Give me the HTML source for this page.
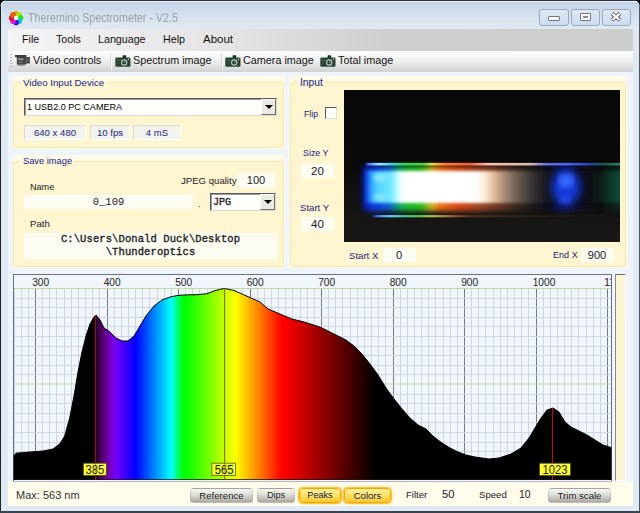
<!DOCTYPE html>
<html><head><meta charset="utf-8"><title>Theremino Spectrometer - V2.5</title>
<style>
html,body{margin:0;padding:0;}
body{width:640px;height:513px;overflow:hidden;background:#000;font-family:"Liberation Sans",sans-serif;font-size:11px;color:#111;position:relative;}
.abs{position:absolute;}
#win{position:absolute;left:0;top:0;width:640px;height:513px;background:linear-gradient(#c2d2e6 0px,#c6d6e9 5px,#d1deed 13px,#dbe5f1 22px,#e0e9f3 30px,#dfe9f4 100%);border-radius:7px 7px 0 0;overflow:hidden;}
#frameL{left:0;top:0;width:2px;height:513px;background:linear-gradient(90deg,#1c2028 0 1px,#dfe7f1 1px 2px);}
#frameR{left:638.6px;top:0;width:1.4px;height:513px;background:#4c5664;}
#frameT{left:0;top:0;width:640px;height:2.4px;background:linear-gradient(#2c323c 0 1.1px,#e6edf5 1.1px 2.4px);}
#frameB{left:0;top:510.6px;width:640px;height:2.4px;background:#3a4250;}
#title{left:28px;top:10.6px;font-size:12px;color:#9da1a7;white-space:nowrap;transform:scaleX(0.892);transform-origin:0 0;}
.cap{top:9px;height:16.6px;border:1px solid #9aa9bd;border-radius:3px;background:linear-gradient(#dfe9f6,#cfdcee);box-sizing:border-box;}
#menubar{left:8px;top:28.7px;width:624.5px;height:21.9px;background:linear-gradient(90deg,#f4f4f4 0%,#e4e4e4 35%,#cfcfcf 60%,#cdcdcd 100%);}
#menubar span{position:absolute;top:4.3px;font-size:10.7px;color:#111;white-space:nowrap;}
#toolbar{left:8px;top:50.5px;width:624.5px;height:21.7px;background:linear-gradient(#fdfdfd 0%,#f0f0f0 45%,#e2e2e2 70%,#d2d2d2 100%);}
#toolbar span{position:absolute;top:3.5px;font-size:10.8px;color:#111;white-space:nowrap;}
#client{left:8px;top:72px;width:624.5px;height:434px;background:#eef4fb;}
.grp{position:absolute;background:#fffae6;}
.grp .bd{position:absolute;border:1px solid #f8e6a6;border-radius:3px;box-sizing:border-box;background:#fff5d1;}
.grp .tt{position:absolute;background:linear-gradient(#fffae6 0 6px,#fff6d4 6px 100%);color:#20248a;white-space:nowrap;padding:0 2px;font-size:9.7px;line-height:13px;}
.lbl{position:absolute;white-space:nowrap;font-size:9.6px;line-height:13px;color:#1a1a2a;}
.blue{color:#20247a;}
.box{position:absolute;background:#fdfcf2;box-sizing:border-box;text-align:center;white-space:nowrap;}
.sunk{background:#f3f4ee;border:1px solid;border-color:#d9d9d0 #fff #fff #d9d9d0;}
.combo{position:absolute;background:#fffefa;box-sizing:border-box;border:1px solid;border-color:#55595f #d8d8d0 #d8d8d0 #55595f;box-shadow:inset 1px 1px 0 #9a9a9a;}
.combo .dd{position:absolute;right:0px;top:0px;bottom:0px;width:15px;background:#ece9e0;border:1px solid;border-color:#fff #6d6d6d #6d6d6d #fff;box-sizing:border-box;}
.combo .dd:after{content:"";position:absolute;left:3px;top:5px;border:4px solid transparent;border-top:4px solid #000;border-bottom:0;}
.mono{font-family:"Liberation Mono",monospace;font-size:10.5px;color:#222;}
.btn{position:absolute;box-sizing:border-box;height:15px;border-radius:4px;border:1px solid rgba(150,150,140,0.3);border-bottom-color:rgba(120,120,110,0.45);background:linear-gradient(#f8f8f4,#dcdcd6 45%,#aaa79f);text-shadow:0 0 2px #fff;text-align:center;font-size:9.6px;line-height:13px;color:#111;white-space:nowrap;}
.btn.on{border-color:#f0a800;background:linear-gradient(#fff0a0,#ffdc58 55%,#ffc830);box-shadow:0 0 1.5px 0.5px #f8b820;}
</style></head><body>
<div id="win">
<div class="abs" id="title">Theremino Spectrometer - V2.5</div>
<svg class="abs" style="left:8px;top:10.2px" width="17" height="17" viewBox="0 0 17 17"><defs><filter id="ib"><feGaussianBlur stdDeviation="0.55"/></filter></defs><g filter="url(#ib)"><circle cx="8.1" cy="8" r="7.8" fill="#fff" opacity="0.4"/><circle cx="8.10" cy="3.60" r="2.9" fill="rgb(224,173,22)"/><circle cx="11.21" cy="4.89" r="2.9" fill="rgb(173,224,22)"/><circle cx="12.50" cy="8.00" r="2.9" fill="rgb(39,224,22)"/><circle cx="11.21" cy="11.11" r="2.9" fill="rgb(22,190,224)"/><circle cx="8.10" cy="12.40" r="2.9" fill="rgb(56,22,224)"/><circle cx="4.99" cy="11.11" r="2.9" fill="rgb(224,22,224)"/><circle cx="3.70" cy="8.00" r="2.9" fill="rgb(224,22,49)"/><circle cx="4.99" cy="4.89" r="2.9" fill="rgb(224,96,22)"/><circle cx="8.1" cy="8" r="2.2" fill="#fff"/></g></svg>
<div class="abs cap" style="left:539px;width:30px;"><div class="abs" style="left:8px;top:6.4px;width:9.5px;height:3px;border:1px solid #6d7685;background:#fff;border-radius:1px"></div></div>
<div class="abs cap" style="left:571px;width:29px;"><div class="abs" style="left:7.6px;top:3px;width:9px;height:6px;border:1px solid #6d7685;background:#fff;border-radius:1px"><div class="abs" style="left:2px;top:2px;width:5px;height:2px;background:#808a98"></div></div></div>
<div class="abs cap" style="left:602px;width:29px;"><svg class="abs" style="left:7.4px;top:2.2px" width="12" height="10" viewBox="0 0 12 10"><path d="M2,1.6 L10,8 M10,1.6 L2,8" stroke="#5e6675" stroke-width="4" stroke-linecap="butt"/><path d="M2.4,1.9 L9.6,7.7 M9.6,1.9 L2.4,7.7" stroke="#fff" stroke-width="2" stroke-linecap="butt"/></svg></div>

<div class="abs" id="menubar">
<span style="left:14px">File</span><span style="left:48px">Tools</span><span style="left:90px">Language</span><span style="left:155px">Help</span><span style="left:195px;font-size:11.5px">About</span>
</div>
<div class="abs" id="toolbar">
<div class="abs" style="left:1.5px;top:3.5px;width:2px;height:14px;background:repeating-linear-gradient(#b4b4b4 0 1.5px,transparent 1.5px 3px)"></div>
<svg class="abs" style="left:7.4px;top:4.6px" width="16" height="12" viewBox="0 0 16 12"><rect x="0" y="0" width="11.5" height="2.1" fill="#3a3a3a"/><rect x="1.8" y="2" width="9.7" height="7.4" fill="#464646"/><rect x="3" y="3.4" width="5.4" height="1.8" fill="#9a9a9a"/><rect x="3.4" y="6.8" width="4.2" height="1" fill="#8a8a8a"/><rect x="11.5" y="2" width="3.3" height="6.4" fill="#2c2c2c"/><rect x="12.6" y="2.6" width="0.9" height="5" fill="#8c8c8c"/><rect x="2.4" y="9.4" width="7.4" height="1.1" fill="#555"/></svg>
<svg class="abs cam" style="left:107px;top:4.6px" width="16" height="12" viewBox="0 0 16 12"><rect x="7.6" y="0.3" width="3.6" height="2.6" rx="0.6" fill="#1c3024"/><rect x="0.3" y="2.4" width="15.2" height="9.4" rx="1.3" fill="#274433"/><rect x="1.2" y="4.6" width="4.2" height="1.1" fill="#4a6a54"/><rect x="1.2" y="7.4" width="3.6" height="1" fill="#3a5a46"/><circle cx="9.2" cy="7.5" r="3.2" fill="#b4c8bc"/><circle cx="9.2" cy="7.5" r="2" fill="#1e3428"/><circle cx="9.7" cy="7.1" r="0.7" fill="#eef4ee"/><circle cx="13.4" cy="4.3" r="0.7" fill="#dfe8df"/></svg>
<svg class="abs cam" style="left:217px;top:4.6px" width="16" height="12" viewBox="0 0 16 12"><rect x="7.6" y="0.3" width="3.6" height="2.6" rx="0.6" fill="#1c3024"/><rect x="0.3" y="2.4" width="15.2" height="9.4" rx="1.3" fill="#274433"/><rect x="1.2" y="4.6" width="4.2" height="1.1" fill="#4a6a54"/><rect x="1.2" y="7.4" width="3.6" height="1" fill="#3a5a46"/><circle cx="9.2" cy="7.5" r="3.2" fill="#b4c8bc"/><circle cx="9.2" cy="7.5" r="2" fill="#1e3428"/><circle cx="9.7" cy="7.1" r="0.7" fill="#eef4ee"/><circle cx="13.4" cy="4.3" r="0.7" fill="#dfe8df"/></svg>
<svg class="abs cam" style="left:312px;top:4.6px" width="16" height="12" viewBox="0 0 16 12"><rect x="7.6" y="0.3" width="3.6" height="2.6" rx="0.6" fill="#1c3024"/><rect x="0.3" y="2.4" width="15.2" height="9.4" rx="1.3" fill="#274433"/><rect x="1.2" y="4.6" width="4.2" height="1.1" fill="#4a6a54"/><rect x="1.2" y="7.4" width="3.6" height="1" fill="#3a5a46"/><circle cx="9.2" cy="7.5" r="3.2" fill="#b4c8bc"/><circle cx="9.2" cy="7.5" r="2" fill="#1e3428"/><circle cx="9.7" cy="7.1" r="0.7" fill="#eef4ee"/><circle cx="13.4" cy="4.3" r="0.7" fill="#dfe8df"/></svg>

<span style="left:25px">Video controls</span><span style="left:125px">Spectrum image</span><span style="left:235px">Camera image</span><span style="left:330px">Total image</span>
<div class="abs" style="left:101.5px;top:3px;width:2px;height:16px;background:linear-gradient(90deg,#d2d2d2 50%,#fbfbfb 50%)"></div>
<div class="abs" style="left:212.5px;top:3px;width:2px;height:16px;background:linear-gradient(90deg,#d2d2d2 50%,#fbfbfb 50%)"></div>
</div>
<div class="abs" id="client"></div>

<!-- Video Input Device -->
<div class="grp" style="left:13px;top:76px;width:272px;height:73px">
<div class="bd" style="left:0;top:6px;width:271px;height:66px"></div>
<div class="tt" style="left:8px;top:0px">Video Input Device</div>
<div class="combo" style="left:11px;top:22px;width:253px;height:18px"><div class="lbl" style="left:2px;top:2px;color:#000;font-size:9.05px">1 USB2.0 PC CAMERA</div><div class="dd"></div></div>
<div class="box sunk lbl blue" style="left:11px;top:49px;width:62px;height:15px">640 x 480</div>
<div class="box sunk lbl blue" style="left:77px;top:49px;width:40px;height:15px">10 fps</div>
<div class="box sunk lbl blue" style="left:120px;top:49px;width:48px;height:15px">4 mS</div>
</div>

<!-- Save image -->
<div class="grp" style="left:13px;top:155px;width:272px;height:113px">
<div class="bd" style="left:0;top:6px;width:271px;height:106px"></div>
<div class="tt" style="left:8px;top:0px;font-size:9.3px">Save image</div>
<div class="lbl" style="left:17px;top:26px;font-size:9.1px">Name</div>
<div class="lbl" style="left:168px;top:19px">JPEG quality</div>
<div class="box lbl" style="left:224px;top:18px;width:38px;height:15px;font-size:11px;line-height:15px">100</div>
<div class="box mono" style="left:11px;top:40px;width:169px;height:14px;line-height:14px">0_109</div>
<div class="lbl" style="left:185px;top:42px">.</div>
<div class="combo" style="left:197px;top:38px;width:66px;height:18px"><div class="lbl mono" style="left:2px;top:2px;-webkit-text-stroke:0.35px #222;font-size:10px">JPG</div><div class="dd"></div></div>
<div class="lbl" style="left:17px;top:62px">Path</div>
<div class="box mono" style="left:11px;top:78px;width:253px;height:26px;line-height:12.5px;-webkit-text-stroke:0.35px #222;letter-spacing:0.1px">C:\Users\Donald Duck\Desktop<br>\Thunderoptics</div>
</div>

<!-- Input -->
<div class="grp" style="left:289px;top:76px;width:338px;height:192px">
<div class="bd" style="left:1px;top:6px;width:336px;height:185px"></div>
<div class="tt" style="left:9px;top:0px;font-size:10.3px">Input</div>
<div class="lbl blue" style="left:15px;top:32px;font-size:8.7px">Flip</div>
<div class="abs" style="left:36px;top:31px;width:12px;height:12px;background:#fff;box-sizing:border-box;border:1px solid;border-color:#55595f #ddd #ddd #55595f"></div>
<div class="lbl blue" style="left:14px;top:71px;font-size:8.9px">Size Y</div>
<div class="box lbl" style="left:12px;top:88px;width:33px;height:14px;font-size:11.5px;line-height:14px">20</div>
<div class="lbl blue" style="left:11px;top:125px">Start Y</div>
<div class="box lbl" style="left:12px;top:141px;width:33px;height:14px;font-size:11.5px;line-height:14px">40</div>
<div class="lbl blue" style="left:60px;top:173px">Start X</div>
<div class="box lbl" style="left:93.5px;top:172px;width:33px;height:14px;font-size:11.2px;line-height:14px">0</div>
<div class="lbl blue" style="left:264px;top:173px;font-size:9.1px">End X</div>
<div class="box lbl" style="left:291.5px;top:172px;width:33px;height:14px;font-size:11.1px;line-height:14px">900</div>
</div>
<svg class="abs" style="left:344px;top:90px" width="276" height="152" viewBox="344 90 276 152">
<defs>
<filter id="b2" x="-5%" y="-30%" width="110%" height="160%"><feGaussianBlur stdDeviation="2.2 1.6"/></filter>
<filter id="b3" x="-5%" y="-30%" width="110%" height="160%"><feGaussianBlur stdDeviation="3 2.4"/></filter>
<filter id="b4" x="-50%" y="-50%" width="200%" height="200%"><feGaussianBlur stdDeviation="4 3"/></filter>
<filter id="b1" x="-5%" y="-200%" width="110%" height="500%"><feGaussianBlur stdDeviation="1.2 0.7"/></filter>
<linearGradient id="cm" gradientUnits="userSpaceOnUse" x1="344" y1="0" x2="620" y2="0"><stop offset="0.0761" stop-color="#0a20c0"/><stop offset="0.0870" stop-color="#1858f8"/><stop offset="0.1014" stop-color="#34b0ff"/><stop offset="0.1232" stop-color="#54d4ff"/><stop offset="0.1739" stop-color="#74e8ff"/><stop offset="0.1957" stop-color="#c8ffff"/><stop offset="0.2138" stop-color="#ffffff"/><stop offset="0.4819" stop-color="#ffffff"/><stop offset="0.5109" stop-color="#ffead0"/><stop offset="0.5507" stop-color="#d8b090"/><stop offset="0.5942" stop-color="#947c6a"/><stop offset="0.6449" stop-color="#5a4e48"/><stop offset="0.6957" stop-color="#2e2a2e"/><stop offset="0.7391" stop-color="#15151c"/><stop offset="0.7681" stop-color="#0e1430"/><stop offset="0.8370" stop-color="#0e1430"/><stop offset="0.8696" stop-color="#0a0e1c"/><stop offset="0.9203" stop-color="#081414"/><stop offset="0.9565" stop-color="#0c3024"/><stop offset="1.0000" stop-color="#124a34"/></linearGradient><linearGradient id="cf" gradientUnits="userSpaceOnUse" x1="344" y1="0" x2="620" y2="0"><stop offset="0.0688" stop-color="#0614a0"/><stop offset="0.1014" stop-color="#0c38f0"/><stop offset="0.1667" stop-color="#1060e0"/><stop offset="0.1957" stop-color="#10a868"/><stop offset="0.2319" stop-color="#18c828"/><stop offset="0.2899" stop-color="#30c020"/><stop offset="0.3152" stop-color="#d8d020"/><stop offset="0.3406" stop-color="#ff7818"/><stop offset="0.4203" stop-color="#e04818"/><stop offset="0.5000" stop-color="#a04828"/><stop offset="0.6014" stop-color="#4a3224"/><stop offset="0.6920" stop-color="#1c1618"/><stop offset="0.7464" stop-color="#0a0c20"/><stop offset="0.8007" stop-color="#0c1c80"/><stop offset="0.8551" stop-color="#0a0c20"/><stop offset="0.9275" stop-color="#060a0c"/><stop offset="1.0000" stop-color="#0a2c20"/></linearGradient><linearGradient id="ct" gradientUnits="userSpaceOnUse" x1="344" y1="0" x2="620" y2="0"><stop offset="0.0688" stop-color="#1030c0" stop-opacity="0"/><stop offset="0.0870" stop-color="#3070ff"/><stop offset="0.1232" stop-color="#a0e0ff"/><stop offset="0.1739" stop-color="#40d0e0"/><stop offset="0.2246" stop-color="#30d050"/><stop offset="0.2899" stop-color="#50d040"/><stop offset="0.3188" stop-color="#f0e040"/><stop offset="0.3623" stop-color="#ff8030"/><stop offset="0.4565" stop-color="#f06038"/><stop offset="0.5217" stop-color="#ffc0b0"/><stop offset="0.6739" stop-color="#d8b8b0"/><stop offset="0.7391" stop-color="#6070e0"/><stop offset="0.8043" stop-color="#4868ff"/><stop offset="0.8913" stop-color="#2440b0"/><stop offset="0.9420" stop-color="#1c5848"/><stop offset="1.0000" stop-color="#2c8458"/></linearGradient><linearGradient id="cb" gradientUnits="userSpaceOnUse" x1="344" y1="0" x2="620" y2="0"><stop offset="0.0978" stop-color="#1030c0" stop-opacity="0"/><stop offset="0.1196" stop-color="#3878ff"/><stop offset="0.1667" stop-color="#60d0ff"/><stop offset="0.2174" stop-color="#40c8a0"/><stop offset="0.2681" stop-color="#48c848"/><stop offset="0.3188" stop-color="#b0c050"/><stop offset="0.3768" stop-color="#a07038"/><stop offset="0.4565" stop-color="#603820" stop-opacity="0.7"/><stop offset="0.7101" stop-color="#302018" stop-opacity="0.5"/><stop offset="1.0000" stop-color="#101010" stop-opacity="0.3"/></linearGradient>
<linearGradient id="cbg" x1="0" y1="0" x2="0" y2="1"><stop offset="0" stop-color="#070707"/><stop offset="0.5" stop-color="#0a0a0a"/><stop offset="0.8" stop-color="#161514"/><stop offset="1" stop-color="#181716"/></linearGradient><clipPath id="camclip"><rect x="344" y="90" width="276" height="152"/></clipPath>
</defs>
<g clip-path="url(#camclip)">
<rect x="344" y="90" width="276" height="152" fill="url(#cbg)"/>
<rect x="363" y="166" width="265" height="45" fill="url(#cf)" filter="url(#b3)" opacity="0.95"/>
<rect x="365" y="171" width="263" height="32" fill="url(#cm)" filter="url(#b2)"/>
<ellipse cx="380" cy="178" rx="7" ry="4" fill="#90e8ff" filter="url(#b2)" opacity="0.8"/>
<ellipse cx="380" cy="197" rx="7" ry="3.5" fill="#90e8ff" filter="url(#b2)" opacity="0.7"/>
<ellipse cx="566" cy="187" rx="14" ry="17" fill="#1638d8" filter="url(#b4)"/>
<ellipse cx="566" cy="181" rx="8" ry="7" fill="#3468ff" filter="url(#b3)"/>
<ellipse cx="565" cy="200" rx="6" ry="3" fill="#2c5cff" filter="url(#b3)" opacity="0.8"/>
<rect x="366" y="162.9" width="262" height="2.6" fill="url(#ct)" filter="url(#b1)"/><rect x="366" y="163.6" width="262" height="1.2" fill="url(#ct)"/>
<rect x="372" y="215.1" width="256" height="2.2" fill="url(#cb)" filter="url(#b1)"/><rect x="374" y="215.7" width="254" height="1" fill="url(#cb)" opacity="0.8"/>
</g>
</svg>

<!-- right strip -->
<div class="abs" style="left:615px;top:274px;width:11px;height:207px;background:#fbf5d6;border:1px solid;border-color:#6a6a6a #fff #fff #8a8a8a;box-sizing:border-box"></div>
<!-- bottom strip -->
<div class="abs" style="left:8px;top:482px;width:624.5px;height:23.6px;background:#fffcec"></div>
<div class="lbl" style="left:16px;top:489px;font-size:11px;color:#333">Max: 563 nm</div>
<div class="btn" style="left:190px;top:488px;width:63px">Reference</div>
<div class="btn" style="left:257px;top:488px;width:38px;font-size:9.1px">Dips</div>
<div class="btn on" style="left:299px;top:488px;width:42px;font-size:9.1px">Peaks</div>
<div class="btn on" style="left:344px;top:488px;width:47px">Colors</div>
<div class="lbl" style="left:406px;top:488px">Filter</div>
<div class="lbl" style="left:442px;top:488px;font-size:11.2px">50</div>
<div class="lbl" style="left:479px;top:488px">Speed</div>
<div class="lbl" style="left:519px;top:488px;font-size:10.5px">10</div>
<div class="btn" style="left:548px;top:488px;width:63px">Trim scale</div>

<svg class="chart" width="640" height="513" viewBox="0 0 640 513" style="position:absolute;left:0;top:0">
<defs><linearGradient id="sg" gradientUnits="userSpaceOnUse" x1="13" y1="0" x2="611" y2="0"><stop offset="0" stop-color="#000"/><stop offset="0.1333" stop-color="rgb(0,0,0)"/><stop offset="0.1393" stop-color="rgb(37,0,40)"/><stop offset="0.1452" stop-color="rgb(66,0,80)"/><stop offset="0.1512" stop-color="rgb(90,0,120)"/><stop offset="0.1572" stop-color="rgb(106,0,159)"/><stop offset="0.1632" stop-color="rgb(116,0,199)"/><stop offset="0.1691" stop-color="rgb(120,0,239)"/><stop offset="0.1751" stop-color="rgb(106,0,255)"/><stop offset="0.1811" stop-color="rgb(85,0,255)"/><stop offset="0.1871" stop-color="rgb(64,0,255)"/><stop offset="0.1931" stop-color="rgb(42,0,255)"/><stop offset="0.1990" stop-color="rgb(21,0,255)"/><stop offset="0.2050" stop-color="rgb(0,0,255)"/><stop offset="0.2110" stop-color="rgb(0,26,255)"/><stop offset="0.2170" stop-color="rgb(0,51,255)"/><stop offset="0.2230" stop-color="rgb(0,76,255)"/><stop offset="0.2289" stop-color="rgb(0,102,255)"/><stop offset="0.2349" stop-color="rgb(0,128,255)"/><stop offset="0.2409" stop-color="rgb(0,153,255)"/><stop offset="0.2469" stop-color="rgb(0,178,255)"/><stop offset="0.2528" stop-color="rgb(0,204,255)"/><stop offset="0.2588" stop-color="rgb(0,230,255)"/><stop offset="0.2648" stop-color="rgb(0,255,255)"/><stop offset="0.2708" stop-color="rgb(0,255,175)"/><stop offset="0.2768" stop-color="rgb(0,255,96)"/><stop offset="0.2827" stop-color="rgb(0,255,16)"/><stop offset="0.2887" stop-color="rgb(0,255,0)"/><stop offset="0.2947" stop-color="rgb(18,255,0)"/><stop offset="0.3007" stop-color="rgb(36,255,0)"/><stop offset="0.3066" stop-color="rgb(55,255,0)"/><stop offset="0.3126" stop-color="rgb(73,255,0)"/><stop offset="0.3186" stop-color="rgb(91,255,0)"/><stop offset="0.3246" stop-color="rgb(109,255,0)"/><stop offset="0.3306" stop-color="rgb(128,255,0)"/><stop offset="0.3365" stop-color="rgb(146,255,0)"/><stop offset="0.3425" stop-color="rgb(164,255,0)"/><stop offset="0.3485" stop-color="rgb(182,255,0)"/><stop offset="0.3545" stop-color="rgb(200,255,0)"/><stop offset="0.3605" stop-color="rgb(219,255,0)"/><stop offset="0.3664" stop-color="rgb(237,255,0)"/><stop offset="0.3724" stop-color="rgb(255,255,0)"/><stop offset="0.3784" stop-color="rgb(255,235,0)"/><stop offset="0.3844" stop-color="rgb(255,216,0)"/><stop offset="0.3903" stop-color="rgb(255,196,0)"/><stop offset="0.3963" stop-color="rgb(255,177,0)"/><stop offset="0.4023" stop-color="rgb(255,157,0)"/><stop offset="0.4083" stop-color="rgb(255,137,0)"/><stop offset="0.4143" stop-color="rgb(255,118,0)"/><stop offset="0.4202" stop-color="rgb(255,98,0)"/><stop offset="0.4262" stop-color="rgb(255,78,0)"/><stop offset="0.4322" stop-color="rgb(255,59,0)"/><stop offset="0.4382" stop-color="rgb(255,39,0)"/><stop offset="0.4441" stop-color="rgb(255,20,0)"/><stop offset="0.4501" stop-color="rgb(255,0,0)"/><stop offset="0.4561" stop-color="rgb(251,0,0)"/><stop offset="0.4621" stop-color="rgb(241,0,0)"/><stop offset="0.4681" stop-color="rgb(231,0,0)"/><stop offset="0.4740" stop-color="rgb(221,0,0)"/><stop offset="0.4800" stop-color="rgb(211,0,0)"/><stop offset="0.4860" stop-color="rgb(201,0,0)"/><stop offset="0.4920" stop-color="rgb(191,0,0)"/><stop offset="0.4980" stop-color="rgb(181,0,0)"/><stop offset="0.5039" stop-color="rgb(171,0,0)"/><stop offset="0.5099" stop-color="rgb(161,0,0)"/><stop offset="0.5159" stop-color="rgb(151,0,0)"/><stop offset="0.5219" stop-color="rgb(141,0,0)"/><stop offset="0.5278" stop-color="rgb(131,0,0)"/><stop offset="0.5338" stop-color="rgb(122,0,0)"/><stop offset="0.5398" stop-color="rgb(112,0,0)"/><stop offset="0.5458" stop-color="rgb(102,0,0)"/><stop offset="0.5518" stop-color="rgb(92,0,0)"/><stop offset="0.5577" stop-color="rgb(82,0,0)"/><stop offset="0.5637" stop-color="rgb(72,0,0)"/><stop offset="0.5697" stop-color="rgb(62,0,0)"/><stop offset="0.5757" stop-color="rgb(52,0,0)"/><stop offset="0.5816" stop-color="rgb(42,0,0)"/><stop offset="0.5876" stop-color="rgb(32,0,0)"/><stop offset="0.5936" stop-color="rgb(22,0,0)"/><stop offset="0.5996" stop-color="rgb(12,0,0)"/><stop offset="0.6056" stop-color="rgb(2,0,0)"/><stop offset="0.6115" stop-color="rgb(0,0,0)"/><stop offset="0.6175" stop-color="rgb(0,0,0)"/><stop offset="1" stop-color="#000"/></linearGradient><clipPath id="cc"><rect x="14" y="275" width="597" height="206"/></clipPath></defs>
<rect x="13.5" y="274.5" width="598" height="207" fill="#f1f6fd" stroke="#6d7078"/><line x1="13" y1="481.5" x2="612" y2="481.5" stroke="#b0b4ba"/>
<g clip-path="url(#cc)" shape-rendering="crispEdges">
<line x1="14.05" y1="288.5" x2="14.05" y2="480" stroke="#cdd6e3" stroke-width="1"/><line x1="21.20" y1="288.5" x2="21.20" y2="480" stroke="#cdd6e3" stroke-width="1"/><line x1="28.35" y1="288.5" x2="28.35" y2="480" stroke="#cdd6e3" stroke-width="1"/><line x1="35.50" y1="288" x2="35.50" y2="480" stroke="#747a8a" stroke-width="1"/><line x1="42.65" y1="288.5" x2="42.65" y2="480" stroke="#cdd6e3" stroke-width="1"/><line x1="49.80" y1="288.5" x2="49.80" y2="480" stroke="#cdd6e3" stroke-width="1"/><line x1="56.95" y1="288.5" x2="56.95" y2="480" stroke="#cdd6e3" stroke-width="1"/><line x1="64.10" y1="288.5" x2="64.10" y2="480" stroke="#cdd6e3" stroke-width="1"/><line x1="71.25" y1="288.5" x2="71.25" y2="480" stroke="#cdd6e3" stroke-width="1"/><line x1="78.40" y1="288.5" x2="78.40" y2="480" stroke="#cdd6e3" stroke-width="1"/><line x1="85.55" y1="288.5" x2="85.55" y2="480" stroke="#cdd6e3" stroke-width="1"/><line x1="92.70" y1="288.5" x2="92.70" y2="480" stroke="#cdd6e3" stroke-width="1"/><line x1="99.85" y1="288.5" x2="99.85" y2="480" stroke="#cdd6e3" stroke-width="1"/><line x1="107.00" y1="288" x2="107.00" y2="480" stroke="#747a8a" stroke-width="1"/><line x1="114.15" y1="288.5" x2="114.15" y2="480" stroke="#cdd6e3" stroke-width="1"/><line x1="121.30" y1="288.5" x2="121.30" y2="480" stroke="#cdd6e3" stroke-width="1"/><line x1="128.45" y1="288.5" x2="128.45" y2="480" stroke="#cdd6e3" stroke-width="1"/><line x1="135.60" y1="288.5" x2="135.60" y2="480" stroke="#cdd6e3" stroke-width="1"/><line x1="142.75" y1="288.5" x2="142.75" y2="480" stroke="#cdd6e3" stroke-width="1"/><line x1="149.90" y1="288.5" x2="149.90" y2="480" stroke="#cdd6e3" stroke-width="1"/><line x1="157.05" y1="288.5" x2="157.05" y2="480" stroke="#cdd6e3" stroke-width="1"/><line x1="164.20" y1="288.5" x2="164.20" y2="480" stroke="#cdd6e3" stroke-width="1"/><line x1="171.35" y1="288.5" x2="171.35" y2="480" stroke="#cdd6e3" stroke-width="1"/><line x1="178.50" y1="288" x2="178.50" y2="480" stroke="#747a8a" stroke-width="1"/><line x1="185.65" y1="288.5" x2="185.65" y2="480" stroke="#cdd6e3" stroke-width="1"/><line x1="192.80" y1="288.5" x2="192.80" y2="480" stroke="#cdd6e3" stroke-width="1"/><line x1="199.95" y1="288.5" x2="199.95" y2="480" stroke="#cdd6e3" stroke-width="1"/><line x1="207.10" y1="288.5" x2="207.10" y2="480" stroke="#cdd6e3" stroke-width="1"/><line x1="214.25" y1="288.5" x2="214.25" y2="480" stroke="#cdd6e3" stroke-width="1"/><line x1="221.40" y1="288.5" x2="221.40" y2="480" stroke="#cdd6e3" stroke-width="1"/><line x1="228.55" y1="288.5" x2="228.55" y2="480" stroke="#cdd6e3" stroke-width="1"/><line x1="235.70" y1="288.5" x2="235.70" y2="480" stroke="#cdd6e3" stroke-width="1"/><line x1="242.85" y1="288.5" x2="242.85" y2="480" stroke="#cdd6e3" stroke-width="1"/><line x1="250.00" y1="288" x2="250.00" y2="480" stroke="#747a8a" stroke-width="1"/><line x1="257.15" y1="288.5" x2="257.15" y2="480" stroke="#cdd6e3" stroke-width="1"/><line x1="264.30" y1="288.5" x2="264.30" y2="480" stroke="#cdd6e3" stroke-width="1"/><line x1="271.45" y1="288.5" x2="271.45" y2="480" stroke="#cdd6e3" stroke-width="1"/><line x1="278.60" y1="288.5" x2="278.60" y2="480" stroke="#cdd6e3" stroke-width="1"/><line x1="285.75" y1="288.5" x2="285.75" y2="480" stroke="#cdd6e3" stroke-width="1"/><line x1="292.90" y1="288.5" x2="292.90" y2="480" stroke="#cdd6e3" stroke-width="1"/><line x1="300.05" y1="288.5" x2="300.05" y2="480" stroke="#cdd6e3" stroke-width="1"/><line x1="307.20" y1="288.5" x2="307.20" y2="480" stroke="#cdd6e3" stroke-width="1"/><line x1="314.35" y1="288.5" x2="314.35" y2="480" stroke="#cdd6e3" stroke-width="1"/><line x1="321.50" y1="288" x2="321.50" y2="480" stroke="#747a8a" stroke-width="1"/><line x1="328.65" y1="288.5" x2="328.65" y2="480" stroke="#cdd6e3" stroke-width="1"/><line x1="335.80" y1="288.5" x2="335.80" y2="480" stroke="#cdd6e3" stroke-width="1"/><line x1="342.95" y1="288.5" x2="342.95" y2="480" stroke="#cdd6e3" stroke-width="1"/><line x1="350.10" y1="288.5" x2="350.10" y2="480" stroke="#cdd6e3" stroke-width="1"/><line x1="357.25" y1="288.5" x2="357.25" y2="480" stroke="#cdd6e3" stroke-width="1"/><line x1="364.40" y1="288.5" x2="364.40" y2="480" stroke="#cdd6e3" stroke-width="1"/><line x1="371.55" y1="288.5" x2="371.55" y2="480" stroke="#cdd6e3" stroke-width="1"/><line x1="378.70" y1="288.5" x2="378.70" y2="480" stroke="#cdd6e3" stroke-width="1"/><line x1="385.85" y1="288.5" x2="385.85" y2="480" stroke="#cdd6e3" stroke-width="1"/><line x1="393.00" y1="288" x2="393.00" y2="480" stroke="#747a8a" stroke-width="1"/><line x1="400.15" y1="288.5" x2="400.15" y2="480" stroke="#cdd6e3" stroke-width="1"/><line x1="407.30" y1="288.5" x2="407.30" y2="480" stroke="#cdd6e3" stroke-width="1"/><line x1="414.45" y1="288.5" x2="414.45" y2="480" stroke="#cdd6e3" stroke-width="1"/><line x1="421.60" y1="288.5" x2="421.60" y2="480" stroke="#cdd6e3" stroke-width="1"/><line x1="428.75" y1="288.5" x2="428.75" y2="480" stroke="#cdd6e3" stroke-width="1"/><line x1="435.90" y1="288.5" x2="435.90" y2="480" stroke="#cdd6e3" stroke-width="1"/><line x1="443.05" y1="288.5" x2="443.05" y2="480" stroke="#cdd6e3" stroke-width="1"/><line x1="450.20" y1="288.5" x2="450.20" y2="480" stroke="#cdd6e3" stroke-width="1"/><line x1="457.35" y1="288.5" x2="457.35" y2="480" stroke="#cdd6e3" stroke-width="1"/><line x1="464.50" y1="288" x2="464.50" y2="480" stroke="#747a8a" stroke-width="1"/><line x1="471.65" y1="288.5" x2="471.65" y2="480" stroke="#cdd6e3" stroke-width="1"/><line x1="478.80" y1="288.5" x2="478.80" y2="480" stroke="#cdd6e3" stroke-width="1"/><line x1="485.95" y1="288.5" x2="485.95" y2="480" stroke="#cdd6e3" stroke-width="1"/><line x1="493.10" y1="288.5" x2="493.10" y2="480" stroke="#cdd6e3" stroke-width="1"/><line x1="500.25" y1="288.5" x2="500.25" y2="480" stroke="#cdd6e3" stroke-width="1"/><line x1="507.40" y1="288.5" x2="507.40" y2="480" stroke="#cdd6e3" stroke-width="1"/><line x1="514.55" y1="288.5" x2="514.55" y2="480" stroke="#cdd6e3" stroke-width="1"/><line x1="521.70" y1="288.5" x2="521.70" y2="480" stroke="#cdd6e3" stroke-width="1"/><line x1="528.85" y1="288.5" x2="528.85" y2="480" stroke="#cdd6e3" stroke-width="1"/><line x1="536.00" y1="288" x2="536.00" y2="480" stroke="#747a8a" stroke-width="1"/><line x1="543.15" y1="288.5" x2="543.15" y2="480" stroke="#cdd6e3" stroke-width="1"/><line x1="550.30" y1="288.5" x2="550.30" y2="480" stroke="#cdd6e3" stroke-width="1"/><line x1="557.45" y1="288.5" x2="557.45" y2="480" stroke="#cdd6e3" stroke-width="1"/><line x1="564.60" y1="288.5" x2="564.60" y2="480" stroke="#cdd6e3" stroke-width="1"/><line x1="571.75" y1="288.5" x2="571.75" y2="480" stroke="#cdd6e3" stroke-width="1"/><line x1="578.90" y1="288.5" x2="578.90" y2="480" stroke="#cdd6e3" stroke-width="1"/><line x1="586.05" y1="288.5" x2="586.05" y2="480" stroke="#cdd6e3" stroke-width="1"/><line x1="593.20" y1="288.5" x2="593.20" y2="480" stroke="#cdd6e3" stroke-width="1"/><line x1="600.35" y1="288.5" x2="600.35" y2="480" stroke="#cdd6e3" stroke-width="1"/><line x1="607.50" y1="288" x2="607.50" y2="480" stroke="#747a8a" stroke-width="1"/><line x1="14" y1="298.10" x2="611" y2="298.10" stroke="#cdd6e3" stroke-width="1"/><line x1="14" y1="307.70" x2="611" y2="307.70" stroke="#cdd6e3" stroke-width="1"/><line x1="14" y1="317.30" x2="611" y2="317.30" stroke="#cdd6e3" stroke-width="1"/><line x1="14" y1="326.90" x2="611" y2="326.90" stroke="#cdd6e3" stroke-width="1"/><line x1="14" y1="336.50" x2="611" y2="336.50" stroke="#cdd6e3" stroke-width="1"/><line x1="14" y1="346.10" x2="611" y2="346.10" stroke="#cdd6e3" stroke-width="1"/><line x1="14" y1="355.70" x2="611" y2="355.70" stroke="#cdd6e3" stroke-width="1"/><line x1="14" y1="365.30" x2="611" y2="365.30" stroke="#cdd6e3" stroke-width="1"/><line x1="14" y1="374.90" x2="611" y2="374.90" stroke="#cdd6e3" stroke-width="1"/><line x1="14" y1="394.10" x2="611" y2="394.10" stroke="#cdd6e3" stroke-width="1"/><line x1="14" y1="403.70" x2="611" y2="403.70" stroke="#cdd6e3" stroke-width="1"/><line x1="14" y1="413.30" x2="611" y2="413.30" stroke="#cdd6e3" stroke-width="1"/><line x1="14" y1="422.90" x2="611" y2="422.90" stroke="#cdd6e3" stroke-width="1"/><line x1="14" y1="432.50" x2="611" y2="432.50" stroke="#cdd6e3" stroke-width="1"/><line x1="14" y1="442.10" x2="611" y2="442.10" stroke="#cdd6e3" stroke-width="1"/><line x1="14" y1="451.70" x2="611" y2="451.70" stroke="#cdd6e3" stroke-width="1"/><line x1="14" y1="461.30" x2="611" y2="461.30" stroke="#cdd6e3" stroke-width="1"/><line x1="14" y1="470.90" x2="611" y2="470.90" stroke="#cdd6e3" stroke-width="1"/>
</g>
<line x1="14" y1="288.5" x2="611" y2="288.5" stroke="#c2dc9e"/>
<line x1="14" y1="384" x2="611" y2="384" stroke="#c2dc9e"/>
<g clip-path="url(#cc)" font-family="Liberation Sans, sans-serif" fill="#222"><text x="32.2" y="285.6" font-size="10.2">300</text><text x="103.7" y="285.6" font-size="10.2">400</text><text x="175.2" y="285.6" font-size="10.2">500</text><text x="246.7" y="285.6" font-size="10.2">600</text><text x="318.2" y="285.6" font-size="10.2">700</text><text x="389.7" y="285.6" font-size="10.2">800</text><text x="461.2" y="285.6" font-size="10.2">900</text><text x="532.7" y="285.6" font-size="10.2">1000</text><text x="604.2" y="285.6" font-size="10.2">1100</text></g>
<path d="M14,479.8 L14,455.5 16,453.2 30,452 43,451 53,449 59.7,444 64.7,436 69.7,418 74,396 78,372 82,352 86,336 90,324 94,317 96,315 100,320 104,328 110,332 116,338 122,341 128,341 134,336 140,326 146,316 154,306 162,300 170,297 178,295.4 186,294.9 197,294.7 207,293.7 214,291 220.6,289.2 225,288.6 234,290.5 242.5,294.2 251,298 260,302 268,309 280,314 292,319 304,322 320,327 334,334 346,340 354,346 362,354 370,364 378,375 386,388 394,399 402,409 410,418 418,425 426,429 434,437 442,443 450,448 458,452 466,455 475,457 489,459 499,458 511,454 521,448 529,438 535,428 541,418 547,410 553,408 559,412 565,422 571,427 579,431 587,435 595,440 603,445 611,447.5 L611,479.8 Z" fill="url(#sg)" stroke="#000" stroke-width="1"/>
<line x1="14" y1="480.5" x2="611" y2="480.5" stroke="#f4f7fb"/>
<line x1="95.3" y1="315" x2="95.3" y2="480" stroke="#8a2622"/>
<line x1="224.6" y1="288" x2="224.6" y2="480" stroke="#80651a"/>
<line x1="552.4" y1="408" x2="552.4" y2="480" stroke="#c01a1a"/>
<g font-family="Liberation Sans, sans-serif" font-size="12" fill="#1a1a00">
<rect x="83.3" y="463.2" width="23" height="12.3" fill="#ffff3c" stroke="#4a4a00" stroke-width="0.8"/><text x="85.6" y="473.7" textLength="18.8" lengthAdjust="spacingAndGlyphs">385</text>
<rect x="211.8" y="463.2" width="23.8" height="12.3" fill="#ecff34" stroke="#62700c" stroke-width="0.9"/><text x="214.8" y="473.7" textLength="18.8" lengthAdjust="spacingAndGlyphs">565</text>
<rect x="539.4" y="463.2" width="31.2" height="12.3" fill="#ffff3c" stroke="#4a4a00" stroke-width="0.8"/><text x="542.4" y="473.7" textLength="25" lengthAdjust="spacingAndGlyphs">1023</text>
</g>
<line x1="95.3" y1="463" x2="95.3" y2="476" stroke="#803030" stroke-opacity="0.55"/><line x1="224.6" y1="463" x2="224.6" y2="476" stroke="#80651a" stroke-opacity="0.5"/>
</svg>
<div class="abs" id="frameL"></div><div class="abs" id="frameR"></div><div class="abs" id="frameT"></div><div class="abs" id="frameB"></div>
</div>
</body></html>
